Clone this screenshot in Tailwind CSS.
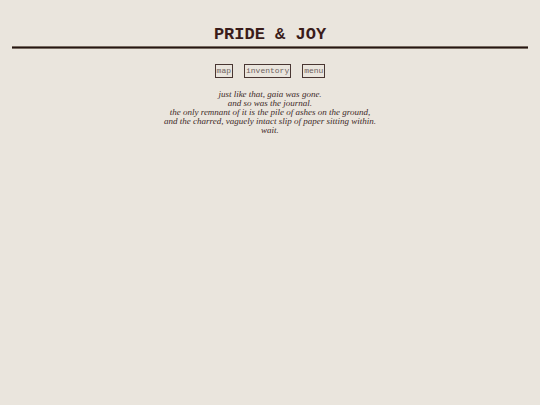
<!DOCTYPE html>
<html lang="en">
<head>
<meta charset="utf-8">
<title>Pride &amp; Joy</title>
<script src="https://cdn.jsdelivr.net/npm/@tailwindcss/browser@4"></script>
</head>
<body class="min-h-screen bg-[#eae5dd] px-3 pt-[25px] text-[#402a28]">
<header class="text-center">
<h1 class="font-['Courier_New','Liberation_Mono',monospace] text-[17px] leading-5 font-bold text-[#3a1c1a]">PRIDE &amp; JOY</h1>
<hr class="mt-px h-[3px] border-y border-[#776b60] bg-[#251512]">
</header>
<nav class="mt-[15px] flex justify-center gap-[11px] font-['Courier_New','Liberation_Mono',monospace] text-[8px] leading-3 text-[#6f635e]">
<button type="button" class="border border-[#493632] px-px">map</button>
<button type="button" class="border border-[#493632] px-px">inventory</button>
<button type="button" class="border border-[#493632] px-px">menu</button>
</nav>
<main class="mt-3 text-center font-[Georgia,'Liberation_Serif',serif] text-[9px] leading-[9px] italic">
<p>just like that, gaia was gone.</p>
<p>and so was the journal.</p>
<p>the only remnant of it is the pile of ashes on the ground,</p>
<p>and the charred, vaguely intact slip of paper sitting within.</p>
<p>wait.</p>
</main>
</body>
</html>
